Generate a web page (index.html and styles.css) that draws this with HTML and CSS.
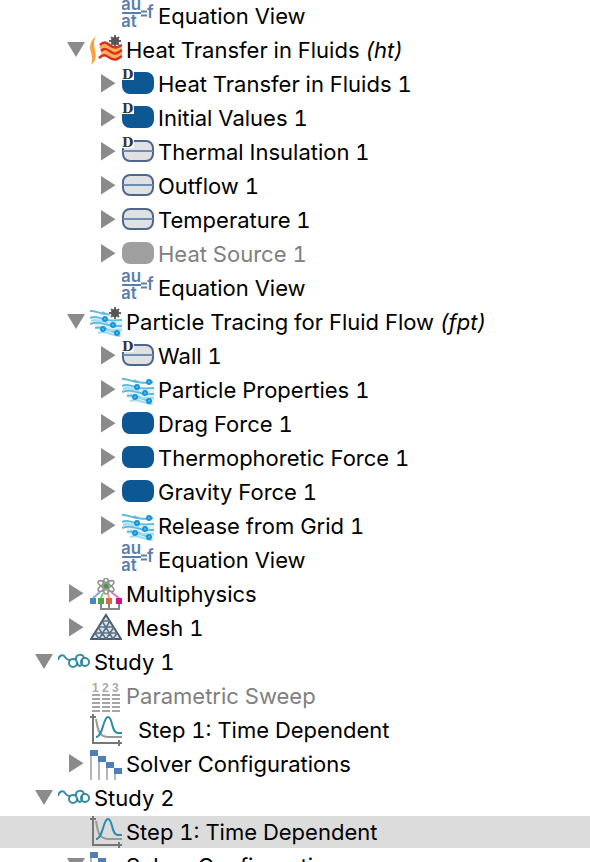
FILE: index.html
```html
<!DOCTYPE html>
<html lang="en">
<head>
<meta charset="utf-8">
<meta name="viewport" content="width=device-width, initial-scale=1">
<title>Model Builder</title>
<link rel="stylesheet" href="styles.css">
</head>
<body>
<svg class="sprite" aria-hidden="true">
  <defs>
    <symbol id="right" viewBox="0 0 18 32"><path d="M2 6L16.500 15.300L2 24.500Z" fill="#8b8b8b"/></symbol>
    <symbol id="down" viewBox="0 0 18 32"><path d="M0 8H18L9 23Z" fill="#8b8b8b"/></symbol>
    <symbol id="star" viewBox="0 0 32 32">
      <g stroke="#666" stroke-width="2"><path d="M25 1V13M19 7H31M21 3L29 11M29 3L21 11"/></g>
      <circle cx="25" cy="7" r="4" fill="#555"/>
    </symbol>
    <symbol id="equation" viewBox="0 0 32 32">
      <g class="formula" fill="#5b7fac"><text x="-1" y="10">au</text><text x="-1" y="27">at</text><text x="25" y="18">f</text></g>
      <path d="M0 13H19M19 11.500H25M19 15.500H25" stroke="#5b7fac" stroke-width="2"/>
    </symbol>
    <symbol id="heat" viewBox="0 0 32 32">
      <path d="M6 2C0 7-1 13 1 18C2 23 3 26 1 31C7 26 6 21 5 16C4 11 3 8 6 2Z" fill="#f9a13c"/>
      <path d="M11 11C15 7 18 9 21 12C24 15 28 14 32 11V22C28 27 24 27 20 24C16 21 14 22 9 25C12 20 12 16 9 13Z" fill="#ffb253"/>
      <g fill="none" stroke="#d92f27" stroke-width="2.500"><path d="M10 11C15 6 18 10 21 12C25 15 28 13 32 11"/><path d="M11 17C15 13 18 16 21 18C25 21 28 19 32 16"/><path d="M9 24C14 19 17 22 20 24C25 27 28 25 32 22"/></g>
      <use href="#star" width="32" height="32"/>
    </symbol>
    <symbol id="domain" viewBox="0 0 32 32"><rect y="4" width="32" height="22" rx="8" fill="#0d5893"/></symbol>
    <symbol id="domain-off" viewBox="0 0 32 32"><rect y="4" width="32" height="22" rx="8" fill="#9f9f9f"/></symbol>
    <symbol id="boundary" viewBox="0 0 32 32">
      <rect x="1" y="5" width="30" height="20" rx="7" fill="#dfe1e2" stroke="#4d688c" stroke-width="2"/>
      <path d="M1 15H31" stroke="#6d8fb7" stroke-width="2"/>
    </symbol>
    <symbol id="default-mark" viewBox="0 0 32 32"><path d="M0 0H12V12H0Z" fill="#fff"/><text class="mark" x="0" y="11">D</text></symbol>
    <symbol id="domain-d" viewBox="0 0 32 32"><use href="#domain" width="32" height="32"/><use href="#default-mark" width="32" height="32"/></symbol>
    <symbol id="boundary-d" viewBox="0 0 32 32"><use href="#boundary" width="32" height="32"/><use href="#default-mark" width="32" height="32"/></symbol>
    <symbol id="flow" viewBox="0 0 32 32">
      <path d="M0 10C11 8 13 18 32 15V31C22 31 18 24 7 24Z" fill="#d8f1fa"/>
      <g fill="none" stroke="#61bddd" stroke-width="2"><path d="M0 5C7 4 11 9 17 8"/><path d="M12 6C18 10 22 9 31 8"/><path d="M0 12C7 9 11 13 16 14"/><path d="M15 13C20 16 25 14 32 14"/><path d="M0 18C7 15 14 18 23 20"/><path d="M23 20L32 20"/><path d="M5 22C12 20 17 24 27 27"/></g>
      <path d="M1 15C7 12 11 17 18 17M16 24C21 26 25 23 32 24M8 27C16 24 22 30 30 30" fill="none" stroke="#a4dcef" stroke-width="2"/>
      <g fill="#45c5fa" stroke="#1a93df" stroke-width="2"><circle cx="15" cy="13" r="2"/><circle cx="23" cy="19" r="2"/><circle cx="13" cy="23" r="2"/><circle cx="27" cy="27" r="2"/></g>
    </symbol>
    <symbol id="flow-star" viewBox="0 0 32 32"><use href="#flow" width="32" height="32"/><circle cx="25" cy="7" r="6" fill="#fff"/><use href="#star" width="32" height="32"/></symbol>
    <symbol id="particles" viewBox="0 0 32 32"><use href="#flow" width="32" height="32"/><circle cx="27" cy="8" r="2" fill="#45c5fa" stroke="#1a93df" stroke-width="2"/></symbol>
    <symbol id="multiphysics" viewBox="0 0 32 32">
      <path d="M10 14L3 20" stroke="#82aed5" stroke-width="2"/><path d="M13 15L11 20" stroke="#86c383" stroke-width="2"/><path d="M18 15L19 20" stroke="#efa18c" stroke-width="2"/><path d="M21 14L29 20" stroke="#de77b2" stroke-width="2"/>
      <g fill="none" stroke="#929292" stroke-width="1.500"><ellipse cx="16" cy="8" rx="3" ry="8"/><ellipse cx="16" cy="8" rx="3" ry="9" transform="rotate(60 16 8)"/><ellipse cx="16" cy="8" rx="3" ry="9" transform="rotate(-60 16 8)"/></g>
      <circle cx="16" cy="8" r="2.500" fill="#4b9855"/>
      <path d="M11 26V31H29V26M19 26V31" fill="none" stroke="#888" stroke-width="2"/>
      <path d="M0 20H6V26H0Z" fill="#4886bf"/><path d="M8 20H14V26H8Z" fill="#4da84d"/><path d="M16 20H22V26H16Z" fill="#df6549"/><path d="M26 20H32V26H26Z" fill="#d3128a"/>
    </symbol>
    <symbol id="mesh" viewBox="0 0 32 32">
      <path d="M16 3L31 27H1Z" fill="#dce2e7" stroke="#485e72" stroke-width="2"/>
      <path d="M12 9H20M8 15H24M5 21H27M12 9L23 27M8 15L16 27M5 21L9 27M20 9L9 27M24 15L16 27M27 21L23 27" stroke="#5c7083" stroke-width="1.500"/>
    </symbol>
    <symbol id="study" viewBox="0 0 32 32">
      <g fill="none" stroke="#358ba2" stroke-width="2"><path d="M0 14C1 9 5 8 7 11C9 14 10 14 12 14"/><circle cx="15" cy="17" r="4"/><path d="M18 14C17 8 25 7 26 12"/><circle cx="27" cy="16" r="4"/><path d="M19 16C20 22 25 21 24 14"/></g>
    </symbol>
    <symbol id="sweep" viewBox="0 0 32 32">
      <g class="digits"><text x="2" y="12">1</text><text x="12" y="12">2</text><text x="22" y="12">3</text></g>
      <path d="M2 15H10M12 15H20M22 15H30M2 19H10M12 19H20M22 19H30M2 23H10M12 23H20M22 23H30M2 27H10M12 27H20M22 27H30M2 31H10M12 31H20M22 31H30" stroke="#a5a5a5" stroke-width="2"/>
    </symbol>
    <symbol id="time" viewBox="0 0 32 32">
      <path d="M3 0V29H32M0 3H6M29 26V32" fill="none" stroke="#777" stroke-width="2"/>
      <path d="M6 5C8 17 9 23 19 23H32" fill="none" stroke="#999" stroke-width="2"/>
      <path d="M6 23C13 23 13 3 18 3C23 3 21 19 28 19H32" fill="none" stroke="#278dac" stroke-width="2"/>
    </symbol>
    <symbol id="solver" viewBox="0 0 32 32">
      <path d="M1 8V32M9 14V32M17 20V32M25 26V32" stroke="#b5b5b5" stroke-width="2"/>
      <path d="M0 2H8V8H0ZM8 8H16V14H8ZM16 14H24V20H16ZM24 20H32V26H24Z" fill="#4d80b7"/>
    </symbol>
  </defs>
</svg>
<main>
<ul class="tree" role="tree" aria-label="Model Builder">
  <li class="row depth-2" role="treeitem"><span class="toggle"></span><svg class="icon"><use href="#equation"/></svg><span class="label">Equation View</span></li>
  <li class="row depth-1" role="treeitem" aria-expanded="true"><button class="toggle" aria-label="Collapse"><svg class="arrow"><use href="#down"/></svg></button><svg class="icon"><use href="#heat"/></svg><span class="label">Heat Transfer in Fluids <em>(ht)</em></span></li>
  <li class="row depth-2" role="treeitem" aria-expanded="false"><button class="toggle" aria-label="Expand"><svg class="arrow"><use href="#right"/></svg></button><svg class="icon"><use href="#domain-d"/></svg><span class="label">Heat Transfer in Fluids 1</span></li>
  <li class="row depth-2" role="treeitem" aria-expanded="false"><button class="toggle" aria-label="Expand"><svg class="arrow"><use href="#right"/></svg></button><svg class="icon"><use href="#domain-d"/></svg><span class="label">Initial Values 1</span></li>
  <li class="row depth-2" role="treeitem" aria-expanded="false"><button class="toggle" aria-label="Expand"><svg class="arrow"><use href="#right"/></svg></button><svg class="icon"><use href="#boundary-d"/></svg><span class="label">Thermal Insulation 1</span></li>
  <li class="row depth-2" role="treeitem" aria-expanded="false"><button class="toggle" aria-label="Expand"><svg class="arrow"><use href="#right"/></svg></button><svg class="icon"><use href="#boundary"/></svg><span class="label">Outflow 1</span></li>
  <li class="row depth-2" role="treeitem" aria-expanded="false"><button class="toggle" aria-label="Expand"><svg class="arrow"><use href="#right"/></svg></button><svg class="icon"><use href="#boundary"/></svg><span class="label">Temperature 1</span></li>
  <li class="row depth-2 disabled" role="treeitem" aria-expanded="false"><button class="toggle" aria-label="Expand"><svg class="arrow"><use href="#right"/></svg></button><svg class="icon"><use href="#domain-off"/></svg><span class="label">Heat Source 1</span></li>
  <li class="row depth-2" role="treeitem"><span class="toggle"></span><svg class="icon"><use href="#equation"/></svg><span class="label">Equation View</span></li>
  <li class="row depth-1" role="treeitem" aria-expanded="true"><button class="toggle" aria-label="Collapse"><svg class="arrow"><use href="#down"/></svg></button><svg class="icon"><use href="#flow-star"/></svg><span class="label">Particle Tracing for Fluid Flow <em>(fpt)</em></span></li>
  <li class="row depth-2" role="treeitem" aria-expanded="false"><button class="toggle" aria-label="Expand"><svg class="arrow"><use href="#right"/></svg></button><svg class="icon"><use href="#boundary-d"/></svg><span class="label">Wall 1</span></li>
  <li class="row depth-2" role="treeitem" aria-expanded="false"><button class="toggle" aria-label="Expand"><svg class="arrow"><use href="#right"/></svg></button><svg class="icon"><use href="#particles"/></svg><span class="label">Particle Properties 1</span></li>
  <li class="row depth-2" role="treeitem" aria-expanded="false"><button class="toggle" aria-label="Expand"><svg class="arrow"><use href="#right"/></svg></button><svg class="icon"><use href="#domain"/></svg><span class="label">Drag Force 1</span></li>
  <li class="row depth-2" role="treeitem" aria-expanded="false"><button class="toggle" aria-label="Expand"><svg class="arrow"><use href="#right"/></svg></button><svg class="icon"><use href="#domain"/></svg><span class="label">Thermophoretic Force 1</span></li>
  <li class="row depth-2" role="treeitem" aria-expanded="false"><button class="toggle" aria-label="Expand"><svg class="arrow"><use href="#right"/></svg></button><svg class="icon"><use href="#domain"/></svg><span class="label">Gravity Force 1</span></li>
  <li class="row depth-2" role="treeitem" aria-expanded="false"><button class="toggle" aria-label="Expand"><svg class="arrow"><use href="#right"/></svg></button><svg class="icon"><use href="#particles"/></svg><span class="label">Release from Grid 1</span></li>
  <li class="row depth-2" role="treeitem"><span class="toggle"></span><svg class="icon"><use href="#equation"/></svg><span class="label">Equation View</span></li>
  <li class="row depth-1" role="treeitem" aria-expanded="false"><button class="toggle" aria-label="Expand"><svg class="arrow"><use href="#right"/></svg></button><svg class="icon"><use href="#multiphysics"/></svg><span class="label">Multiphysics</span></li>
  <li class="row depth-1" role="treeitem" aria-expanded="false"><button class="toggle" aria-label="Expand"><svg class="arrow"><use href="#right"/></svg></button><svg class="icon"><use href="#mesh"/></svg><span class="label">Mesh 1</span></li>
  <li class="row depth-0" role="treeitem" aria-expanded="true"><button class="toggle" aria-label="Collapse"><svg class="arrow"><use href="#down"/></svg></button><svg class="icon"><use href="#study"/></svg><span class="label">Study 1</span></li>
  <li class="row depth-1 disabled" role="treeitem"><span class="toggle"></span><svg class="icon"><use href="#sweep"/></svg><span class="label">Parametric Sweep</span></li>
  <li class="row depth-1 sub-step" role="treeitem"><span class="toggle"></span><svg class="icon"><use href="#time"/></svg><span class="label">Step 1: Time Dependent</span></li>
  <li class="row depth-1" role="treeitem" aria-expanded="false"><button class="toggle" aria-label="Expand"><svg class="arrow"><use href="#right"/></svg></button><svg class="icon"><use href="#solver"/></svg><span class="label">Solver Configurations</span></li>
  <li class="row depth-0" role="treeitem" aria-expanded="true"><button class="toggle" aria-label="Collapse"><svg class="arrow"><use href="#down"/></svg></button><svg class="icon"><use href="#study"/></svg><span class="label">Study 2</span></li>
  <li class="row depth-1 selected" role="treeitem" aria-selected="true"><span class="toggle"></span><svg class="icon"><use href="#time"/></svg><span class="label">Step 1: Time Dependent</span></li>
  <li class="row depth-1" role="treeitem" aria-expanded="true"><button class="toggle" aria-label="Collapse"><svg class="arrow"><use href="#down"/></svg></button><svg class="icon"><use href="#solver"/></svg><span class="label">Solver Configurations</span></li>
</ul>
</main>
</body>
</html>
```
FILE: styles.css
```css
body {
  margin: 0;
  height: 100vh;
  overflow: hidden;
  background: #fff;
  color: #000;
  font: 22px/32px Inter, "Liberation Sans", sans-serif;
  font-variant-numeric: tabular-nums;
}

.sprite {
  display: block;
  width: 0;
  height: 0;
}

.tree {
  display: flex;
  flex-direction: column;
  gap: 2px;
  margin: 0;
  padding: 0;
  list-style: none;
}

.row {
  display: flex;
  height: 32px;
  white-space: nowrap;
}

.depth-0 { padding-left: 35px; }
.depth-1 { padding-left: 67px; }
.depth-2 { padding-left: 99px; }

.toggle {
  flex: none;
  width: 23px;
  height: 32px;
  padding: 0;
  border: 0;
  background: none;
  text-align: left;
}

.arrow {
  display: block;
  width: 18px;
  height: 32px;
}

.icon {
  flex: none;
  width: 32px;
  height: 32px;
}

.label { padding-left: 4px; }
.sub-step .label { padding-left: 16px; }
.disabled { color: #808080; }
.selected { background: #dcdcdc; }

.formula {
  font: 600 17px Inter, sans-serif;
}

.mark {
  fill: #333;
  font: bold 13px "DejaVu Serif", serif;
}

.digits {
  fill: #aaa;
  font: bold 12px "Liberation Sans", sans-serif;
}
```
